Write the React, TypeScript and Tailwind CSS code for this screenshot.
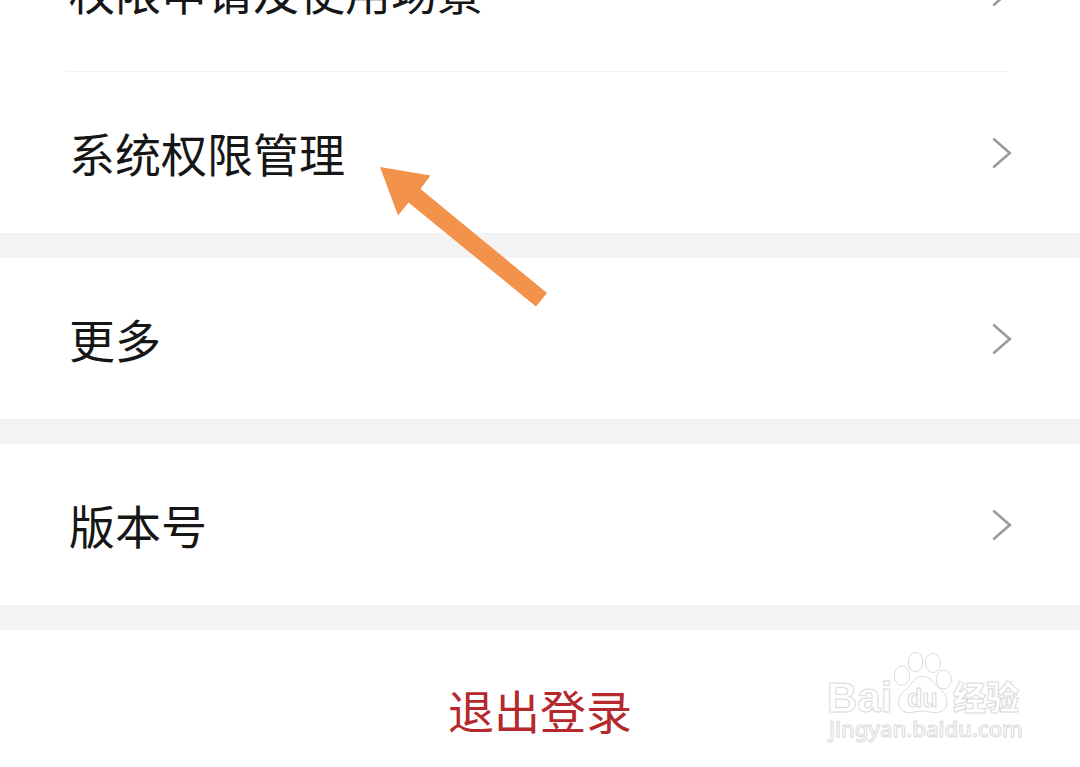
import React, { ReactElement } from 'react';

interface SettingItem {
  label: string;
  pointed?: boolean;
}

const settingGroups: SettingItem[][] = [
  [{ label: '权限申请及使用场景' }, { label: '系统权限管理', pointed: true }],
  [{ label: '更多' }],
  [{ label: '版本号' }],
];

const ChevronIcon = (): ReactElement => (
  <svg
    className="h-8 w-5 shrink-0"
    viewBox="0 0 20 32"
    fill="none"
    stroke="#9a9a9a"
    strokeWidth="2.6"
    strokeLinecap="round"
    aria-hidden="true"
  >
    <path d="M2 2.300 17.800 16 2 29.700" />
  </svg>
);

const PointerArrow = (): ReactElement => (
  <svg
    className="pointer-events-none absolute left-[380px] top-[94px] z-10 h-[142px] w-[168px]"
    viewBox="0 0 168 142"
    fill="#f3924b"
    aria-hidden="true"
  >
    <path d="M0 1 50.500 9.500 40.500 23 167 127 156 140.500 28.500 36.500 18 49.500Z" />
  </svg>
);

const SettingRow: React.FC<{ item: SettingItem }> = ({ item }) => (
  <li className="relative">
    <button
      type="button"
      className="flex h-[161px] w-full items-center justify-between pl-[69px] pr-[68px] text-left"
    >
      <span className="pt-1.5 text-[46px] leading-[64px]">{item.label}</span>
      <ChevronIcon />
    </button>
    {item.pointed && <PointerArrow />}
  </li>
);

const Watermark = (): ReactElement => (
  <svg
    className="pointer-events-none absolute bottom-5 right-14 h-[97px] w-[200px]"
    viewBox="0 0 200 97"
    fill="#fff"
    stroke="#dadada"
    strokeWidth="1"
    aria-hidden="true"
  >
    {/* paw */}
    <ellipse cx="78" cy="25.500" rx="7.700" ry="9.800" />
    <ellipse cx="91.500" cy="12" rx="7.300" ry="9.700" />
    <ellipse cx="108.800" cy="13" rx="7.700" ry="9.500" />
    <ellipse cx="119.800" cy="29.500" rx="7.500" ry="9.500" />
    <path d="M98.500 26.500c-7 0-9.500 5-12.500 9-4 5-11.500 8-11.500 16.500 0 8 6 11.500 13 10.500 4-.7 7-1.500 11-1.500s7 1.200 12 1.500c8 .4 12.500-4 12.500-11 0-8.500-7-11.500-11-16.500-3.500-4.500-6.500-8.500-13.500-8.500Z" />
    {/* lettering */}
    <g className="font-['Liberation_Sans',Arial,sans-serif] font-bold">
      <text x="3" y="62" fontSize="42">
        Bai
      </text>
      <text x="83" y="57" fontSize="25">
        du
      </text>
    </g>
    <text
      x="129"
      y="60"
      fontSize="33"
      className="font-['Noto_Sans_CJK_SC',sans-serif] font-black"
    >
      经验
    </text>
    <text
      x="5"
      y="87"
      fontSize="22"
      className="font-['Noto_Sans',sans-serif] font-medium"
    >
      jingyan.baidu.com
    </text>
  </svg>
);

const App: React.FC = () => {
  return (
    <div className="relative min-h-screen overflow-hidden bg-white font-['Liberation_Sans','Noto_Sans_CJK_SC',sans-serif] text-[#161616]">
      {/* the list is scrolled, its first row is half out of view */}
      <main className="-mt-[90px]">
        {settingGroups.map((group) => (
          <section
            key={group[0].label}
            className="border-b-[25px] border-[#f3f3f3]"
          >
            <ul>
              {group.map((item, index) => (
                <React.Fragment key={item.label}>
                  {index > 0 && (
                    <li
                      role="separator"
                      className="ml-[66px] mr-[72px] h-px bg-[#f2f2f2]"
                    />
                  )}
                  <SettingRow item={item} />
                </React.Fragment>
              ))}
            </ul>
          </section>
        ))}
        {/* log out */}
        <button
          type="button"
          className="flex h-[137px] w-full items-center justify-center pt-7 text-[46px] leading-[64px] text-[#b5292c]"
        >
          退出登录
        </button>
      </main>
      <Watermark />
    </div>
  );
};

export default App;
